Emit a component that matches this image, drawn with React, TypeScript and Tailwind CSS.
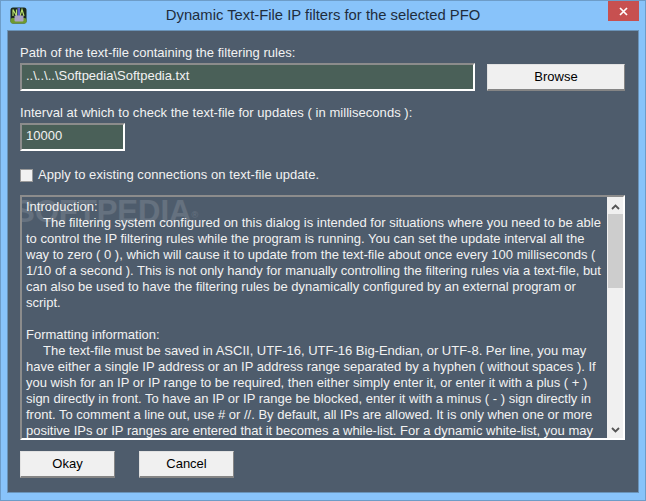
const lines = [
  { text: 'Introduction:' },
  { text: 'The filtering system configured on this dialog is intended for situations where you need to be able', indent: true },
  { text: 'to control the IP filtering rules while the program is running. You can set the update interval all the' },
  { text: 'way to zero ( 0 ), which will cause it to update from the text-file about once every 100 milliseconds (' },
  { text: '1/10 of a second ). This is not only handy for manually controlling the filtering rules via a text-file, but' },
  { text: 'can also be used to have the filtering rules be dynamically configured by an external program or' },
  { text: 'script.' },
  { text: '\u00a0' },
  { text: 'Formatting information:' },
  { text: 'The text-file must be saved in ASCII, UTF-16, UTF-16 Big-Endian, or UTF-8. Per line, you may', indent: true },
  { text: 'have either a single IP address or an IP address range separated by a hyphen ( without spaces ). If' },
  { text: 'you wish for an IP or IP range to be required, then either simply enter it, or enter it with a plus ( + )' },
  { text: 'sign directly in front. To have an IP or IP range be blocked, enter it with a minus ( - ) sign directly in' },
  { text: 'front. To comment a line out, use # or //. By default, all IPs are allowed. It is only when one or more' },
  { text: 'positive IPs or IP ranges are entered that it becomes a while-list. For a dynamic white-list, you may' },
];

function Btn({ label, className }: { label: string; className: string }) {
  return (
    <button className={`h-[27px] bg-[#f0f0f0] border border-[#e2e2e2] border-r-[#858585] border-b-2 border-b-[#858585] text-[13px] text-black ${className}`}>
      {label}
    </button>
  );
}

export default function App() {
  return (
    <div className="w-[646px] h-[501px] bg-[#88c3fa] border border-[#6d9cc8] flex flex-col font-['Liberation_Sans',Arial,sans-serif] overflow-hidden">
      {/* Title bar */}
      <div className="relative h-[29px] shrink-0 flex items-center justify-center text-[14.8px] text-[#1f2d3d]">
        <span>Dynamic Text-File IP filters for the selected PFO</span>
        <svg className="absolute left-[9px] top-[6px]" width="17" height="17" viewBox="0 0 17 17">
          <rect x="0.5" y="0.5" width="16" height="16" rx="2.5" fill="#1d2a1c" />
          <rect x="0.5" y="11" width="16" height="5.5" rx="2" fill="#6f9a2e" />
          <path d="M3 9V2.5L6.5 9V2.5" stroke="#b9e070" strokeWidth="1.2" fill="none" />
          <path d="M10 9L12 2.5L14 9" stroke="#b9e070" strokeWidth="1.2" fill="none" />
          <rect x="7.5" y="1" width="2.5" height="8" fill="#5a62c8" />
          <rect x="4.5" y="8.5" width="9" height="6" rx="1" fill="#aaa3c4" />
        </svg>
        <div className="absolute right-[6px] top-0 w-[31px] h-[20px] bg-[#c75050] flex items-center justify-center">
          <svg width="9" height="9" viewBox="0 0 9 9">
            <path d="M1 1L8 8M8 1L1 8" stroke="#fff" strokeWidth="1.7" />
          </svg>
        </div>
      </div>

      {/* Client area */}
      <div className="flex-1 mx-[6px] mb-[7px] bg-[#4e5c6c] border border-[#6a93b8] flex flex-col pl-[12px] pr-[13px] text-[13px] text-[#f2f2f2] leading-[16px]">
        <div className="mt-[14px] tracking-[0.03px]">Path of the text-file containing the filtering rules:</div>
        <div className="mt-[2px] flex items-start">
          <div className="w-[455px] h-[28px] bg-[#4a6058] border-2 border-[#8c8c8c] border-r-white border-b-white pl-[4px] pt-[3px]">
            ..\..\..\Softpedia\Softpedia.txt
          </div>
          <Btn label="Browse" className="ml-[12px] mt-[1px] w-[138px] shrink-0" />
        </div>
        <div className="mt-[14px] tracking-[0.04px]">Interval at which to check the text-file for updates ( in milliseconds ):</div>
        <div className="mt-[2px] w-[105px] h-[28px] bg-[#4a6058] border-2 border-[#8c8c8c] border-r-white border-b-white pl-[4px] pt-[3px]">10000</div>
        <label className="mt-[16px] flex items-center h-[16px]">
          <span className="w-[13px] h-[13px] bg-[#f2f2f2] border border-[#9a9a9a] shrink-0" />
          <span className="ml-[5px] tracking-[0.06px]">Apply to existing connections on text-file update.</span>
        </label>

        {/* Description box */}
        <div className="mt-[12px] relative h-[245px] border-2 border-[#8c8c8c] border-r-white border-b-white flex overflow-hidden">
          <div className="absolute left-[-8px] top-[-3px] text-[31px] font-bold text-white/[0.13] leading-[36px] whitespace-nowrap">
            SOFTPEDIA<sup className="text-[9px] font-normal">®</sup>
          </div>
          <div className="relative flex-1 pl-[4px] pt-[2px] overflow-hidden whitespace-pre">
            {lines.map((line, i) => (
              <div key={i} className={line.indent ? 'pl-[17px]' : ''}>{line.text}</div>
            ))}
          </div>
          <div className="w-[16px] shrink-0 bg-[#f0f0f0] flex flex-col items-center">
            <svg className="mt-[7px] mb-[4px]" width="9" height="6" viewBox="0 0 9 6">
              <path d="M1 5L4.5 1.5L8 5" stroke="#555" strokeWidth="1.8" fill="none" />
            </svg>
            <div className="w-[15px] h-[74px] bg-[#cdcdcd]" />
            <div className="flex-1" />
            <svg className="mb-[5px]" width="9" height="6" viewBox="0 0 9 6">
              <path d="M1 1L4.5 4.5L8 1" stroke="#555" strokeWidth="1.8" fill="none" />
            </svg>
          </div>
        </div>

        <div className="mt-[11px] flex">
          <Btn label="Okay" className="w-[95px]" />
          <Btn label="Cancel" className="ml-[24px] w-[95px]" />
        </div>
      </div>
    </div>
  );
}
